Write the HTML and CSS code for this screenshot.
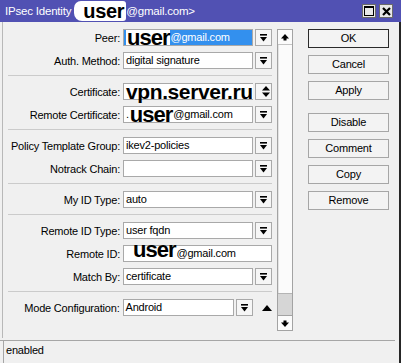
FILE: index.html
```html
<!DOCTYPE html>
<html lang="en">

<head>
    <meta charset="UTF-8">
    <title>IPsec Identity</title>
    <link rel="stylesheet" href="styles.css">
</head>

<body>
    <div class="window">
        <div class="titlebar">
            <span class="title">IPsec Identity <span class="redact-title">user</span>@gmail.com&gt;</span>
            <span class="wbtn">
                <svg width="10" height="10" viewBox="0 0 10 10"><rect x="0.5" y="0.5" width="9" height="9" fill="none" stroke="#000"/><rect x="0" y="0" width="10" height="2" fill="#000"/></svg>
            </span>
            <span class="wbtn">
                <svg width="9" height="9" viewBox="0 0 9 9"><path d="M1 1 L8 8 M8 1 L1 8" stroke="#000" stroke-width="2.2"/></svg>
            </span>
        </div>

        <div class="frame">
            <div class="main">
                <div class="form-panel">
                    <div class="fields">
                        <div class="section">
                            <div class="row">
                                <span class="label">Peer:</span>
                                <div class="field selected"><span class="redact">user</span>@gmail.com</div>
                                <span class="drop"><svg width="7" height="8" viewBox="0 0 7 8"><rect width="7" height="1.6"/><polygon points="0,3 7,3 3.5,7.5"/></svg></span>
                            </div>
                            <div class="row">
                                <span class="label">Auth. Method:</span>
                                <div class="field">digital signature</div>
                                <span class="drop"><svg width="7" height="8" viewBox="0 0 7 8"><rect width="7" height="1.6"/><polygon points="0,3 7,3 3.5,7.5"/></svg></span>
                            </div>
                        </div>

                        <div class="section">
                            <div class="row">
                                <span class="label">Certificate:</span>
                                <div class="field"><span class="redact big">vpn.server.ru</span></div>
                                <span class="drop updown"><svg width="8" height="11" viewBox="0 0 8 11"><polygon points="4,0 8,4.5 0,4.5"/><polygon points="0,6.5 8,6.5 4,11"/></svg></span>
                            </div>
                            <div class="row">
                                <span class="label">Remote Certificate:</span>
                                <div class="field">.<span class="redact">user</span>@gmail.com</div>
                                <span class="drop"><svg width="7" height="8" viewBox="0 0 7 8"><rect width="7" height="1.6"/><polygon points="0,3 7,3 3.5,7.5"/></svg></span>
                            </div>
                        </div>

                        <div class="section">
                            <div class="row">
                                <span class="label">Policy Template Group:</span>
                                <div class="field">ikev2-policies</div>
                                <span class="drop"><svg width="7" height="8" viewBox="0 0 7 8"><rect width="7" height="1.6"/><polygon points="0,3 7,3 3.5,7.5"/></svg></span>
                            </div>
                            <div class="row">
                                <span class="label">Notrack Chain:</span>
                                <div class="field"></div>
                                <span class="drop"><svg width="7" height="8" viewBox="0 0 7 8"><rect width="7" height="1.6"/><polygon points="0,3 7,3 3.5,7.5"/></svg></span>
                            </div>
                        </div>

                        <div class="section">
                            <div class="row">
                                <span class="label">My ID Type:</span>
                                <div class="field">auto</div>
                                <span class="drop"><svg width="7" height="8" viewBox="0 0 7 8"><rect width="7" height="1.6"/><polygon points="0,3 7,3 3.5,7.5"/></svg></span>
                            </div>
                        </div>

                        <div class="section">
                            <div class="row">
                                <span class="label">Remote ID Type:</span>
                                <div class="field">user fqdn</div>
                                <span class="drop"><svg width="7" height="8" viewBox="0 0 7 8"><rect width="7" height="1.6"/><polygon points="0,3 7,3 3.5,7.5"/></svg></span>
                            </div>
                            <div class="row">
                                <span class="label">Remote ID:</span>
                                <div class="field wide"><span class="redact raised">user</span>@gmail.com</div>
                            </div>
                            <div class="row">
                                <span class="label">Match By:</span>
                                <div class="field">certificate</div>
                                <span class="drop"><svg width="7" height="8" viewBox="0 0 7 8"><rect width="7" height="1.6"/><polygon points="0,3 7,3 3.5,7.5"/></svg></span>
                            </div>
                        </div>

                        <div class="section">
                            <div class="row">
                                <span class="label">Mode Configuration:</span>
                                <div class="field short">Android</div>
                                <span class="drop"><svg width="7" height="8" viewBox="0 0 7 8"><rect width="7" height="1.6"/><polygon points="0,3 7,3 3.5,7.5"/></svg></span>
                                <span class="collapse"><svg width="10" height="6" viewBox="0 0 10 6"><polygon points="5,0 10,6 0,6"/></svg></span>
                            </div>
                        </div>
                    </div>

                    <div class="scrollbar">
                        <div class="sb-btn up"><svg width="8" height="7" viewBox="0 0 8 7"><polygon points="4,0 8,4.5 0,4.5"/><rect x="2.5" y="4" width="3" height="2.5"/></svg></div>
                        <div class="sb-track"></div>
                        <div class="sb-thumb"></div>
                        <div class="sb-btn down"><svg width="8" height="7" viewBox="0 0 8 7"><rect x="2.5" y="0.5" width="3" height="2.5"/><polygon points="0,2.5 8,2.5 4,7"/></svg></div>
                    </div>
                </div>

                <div class="buttons">
                    <div class="btn default">OK</div>
                    <div class="btn">Cancel</div>
                    <div class="btn group-end">Apply</div>
                    <div class="btn">Disable</div>
                    <div class="btn">Comment</div>
                    <div class="btn">Copy</div>
                    <div class="btn">Remove</div>
                </div>
            </div>

            <div class="status">
                <div class="status-box">enabled</div>
            </div>
        </div>
    </div>
</body>

</html>
```

FILE: styles.css
```css
* {
    margin: 0;
    padding: 0;
    box-sizing: border-box;
}

body {
    font-family: 'Liberation Sans', Arial, sans-serif;
    font-size: 11px;
    letter-spacing: -0.2px;
    color: #000;
    background-color: #f0f0f0;
}

.window {
    width: 401px;
    height: 363px;
    display: flex;
    flex-direction: column;
    overflow: hidden;
}

/* title bar */
.titlebar {
    height: 22px;
    flex-shrink: 0;
    display: flex;
    align-items: center;
    gap: 3px;
    padding: 0 8px 0 5px;
    background-color: #5151b3;
    color: #fff;
}

.title {
    flex: 1;
    font-size: 11.5px;
    line-height: 20px;
    white-space: nowrap;
}

.redact-title {
    display: inline-block;
    height: 20px;
    line-height: 20px;
    padding: 0 2px 0 9px;
    vertical-align: top;
    background-color: #fff;
    border-radius: 7px 3px 3px 8px;
    color: #000;
    font-size: 20px;
    font-weight: bold;
    letter-spacing: -0.3px;
}

.wbtn {
    width: 14px;
    height: 14px;
    display: flex;
    align-items: center;
    justify-content: center;
    background-color: #e8e8e8;
    border: 1px solid #6a6a6a;
}

/* window body */
.frame {
    flex: 1;
    display: flex;
    flex-direction: column;
    border-right: 2px solid #262626;
}

.main {
    height: 316px;
    display: flex;
}

.form-panel {
    width: 291px;
    margin-left: 2px;
    display: flex;
    border-left: 1px solid #b8b8b8;
}

.fields {
    width: 269px;
}

.section {
    margin-left: 5px;
    padding: 7px 0 6px;
    border-bottom: 1px solid #cbcbcb;
}

.section:last-child {
    border-bottom: none;
}

.row {
    height: 17px;
    display: flex;
    align-items: center;
}

.row + .row {
    margin-top: 6px;
}

.label {
    width: 112px;
    margin-right: 3px;
    text-align: right;
    white-space: nowrap;
}

.field {
    width: 130px;
    height: 17px;
    padding-left: 2px;
    line-height: 15px;
    white-space: nowrap;
    background-color: #fff;
    border: 1px solid #a9a9a9;
}

.field.wide {
    width: 149px;
}

.field.short {
    width: 112px;
}

.field.selected {
    background-color: #3390ee;
    color: #fff;
}

.redact {
    position: relative;
    z-index: 2;
    display: inline-block;
    vertical-align: top;
    line-height: 15px;
    padding: 0 1px;
    background-color: #fff;
    color: #000;
    font-size: 22px;
    font-weight: bold;
    letter-spacing: -1px;
}

.redact.big {
    font-size: 21px;
    letter-spacing: -0.4px;
    padding: 0;
}

.redact.raised {
    margin-left: 6px;
    top: -4px;
    background-color: transparent;
}

.drop {
    width: 17px;
    height: 17px;
    margin-left: 2px;
    display: flex;
    align-items: center;
    justify-content: center;
    background-color: #f6f6f6;
    border: 1px solid #a9a9a9;
}

.drop.updown {
    justify-content: flex-end;
    padding-right: 1px;
}

.collapse {
    margin-left: 9px;
    display: flex;
}

/* scrollbar */
.scrollbar {
    width: 16px;
    height: 302px;
    margin: 7px 0 0 5px;
    display: flex;
    flex-direction: column;
    background-color: #fbfbfb;
    border: 1px solid #a3a3a3;
}

.sb-btn {
    height: 15px;
    display: flex;
    align-items: center;
    justify-content: center;
}

.sb-btn.up {
    border-bottom: 1px solid #c4c4c4;
}

.sb-track {
    flex: 1;
    border-left: 1px solid #e4e4e4;
}

.sb-thumb {
    height: 22px;
    background-color: #d6d6d6;
    border-top: 1px solid #b4b4b4;
}

.sb-btn.down {
    border-top: 1px solid #a3a3a3;
}

/* command buttons */
.buttons {
    width: 81px;
    margin-left: 15px;
    padding-top: 7px;
    display: flex;
    flex-direction: column;
    gap: 7px;
}

.btn {
    height: 19px;
    line-height: 17px;
    text-align: center;
    background-color: #f3f3f3;
    border: 1px solid #a6a6a6;
}

.btn.default {
    border-color: #2a2a2a;
}

.btn.group-end {
    margin-bottom: 6px;
}

/* status bar */
.status {
    flex: 1;
    margin: 2px 4px 0 0;
    border-top: 1px solid #a6a6a6;
}

.status-box {
    height: 100%;
    margin-left: 3px;
    padding: 3px 0 0 2px;
    border-left: 1px solid #a6a6a6;
}
```
